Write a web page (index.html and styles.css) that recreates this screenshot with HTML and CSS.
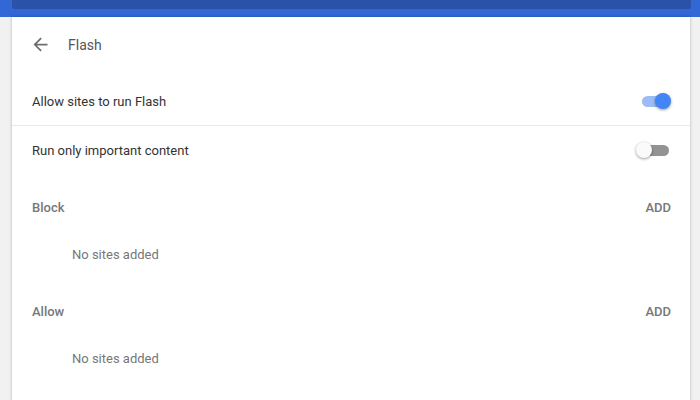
FILE: index.html
```html
<!DOCTYPE html>
<html lang="en">

<head>
    <meta charset="UTF-8">
    <title>Flash</title>
    <link rel="stylesheet" href="styles.css">
</head>

<body>

    <div class="toolbar">
        <div class="toolbar-strip"></div>
    </div>

    <div class="card">
        <div class="subpage-title">
            <svg class="back" viewBox="0 0 24 24" width="21" height="21">
                <path d="M20 11H7.83l5.59-5.59L12 4l-8 8 8 8 1.41-1.41L7.83 13H20v-2z" fill="#6e6e6e"/>
            </svg>
            <span>Flash</span>
        </div>

        <div class="row">
            <span>Allow sites to run Flash</span>
            <span class="toggle on"><span class="bar"></span><span class="knob"></span></span>
        </div>
        <div class="row divided">
            <span>Run only important content</span>
            <span class="toggle"><span class="bar"></span><span class="knob"></span></span>
        </div>

        <div class="section first">
            <div class="section-head">
                <span>Block</span>
                <span class="add">ADD</span>
            </div>
            <div class="empty">No sites added</div>
        </div>

        <div class="section">
            <div class="section-head">
                <span>Allow</span>
                <span class="add">ADD</span>
            </div>
            <div class="empty">No sites added</div>
        </div>
    </div>

</body>

</html>
```

FILE: styles.css
```css
body {
    margin: 0;
    background-color: #f1f1f1;
    font-family: Roboto, "Liberation Sans", sans-serif;
    font-size: 13px;
    color: #333;
    overflow: hidden;
}

.toolbar {
    height: 17px;
    background-color: #3367d6;
    padding: 0 9px 0 12px;
}

.toolbar-strip {
    height: 9px;
    background-color: #2a52a9;
    border-radius: 0 0 2px 2px;
}

.card {
    margin: 0 10px 0 12px;
    background-color: #fff;
    height: 400px;
    box-shadow: 0 0 3px rgba(0, 0, 0, 0.25);
}

.subpage-title {
    height: 56px;
    margin-bottom: 4px;
    display: flex;
    align-items: center;
    padding-left: 18px;
    font-size: 14px;
    color: #555;
}

.subpage-title .back {
    margin-right: 17px;
    margin-top: -2px;
}

.row {
    height: 48px;
    display: flex;
    align-items: center;
    justify-content: space-between;
    padding: 0 21px 0 20px;
}

.row.divided {
    border-top: 1px solid #e8e8e8;
}

/* toggle */
.toggle {
    position: relative;
    width: 29px;
    height: 16px;
}

.toggle .bar {
    position: absolute;
    left: 0;
    right: 0;
    top: 3px;
    height: 11px;
    border-radius: 6px;
    background-color: #939393;
}

.toggle .knob {
    position: absolute;
    left: -4px;
    top: 0;
    width: 16px;
    height: 16px;
    border-radius: 50%;
    background-color: #fafafa;
    box-shadow: 0 1px 3px rgba(0, 0, 0, 0.4);
}

.toggle.on .bar {
    background-color: #9bbcf6;
    left: 2px;
}

.toggle.on .knob {
    left: auto;
    right: -2px;
    background-color: #4285f4;
}

.section {
    margin-top: 10px;
}

.section.first {
    margin-top: 9px;
}

.section-head {
    height: 48px;
    display: flex;
    align-items: center;
    justify-content: space-between;
    padding: 0 19px 0 20px;
    color: #777;
    font-weight: 500;
}

.empty {
    height: 46px;
    display: flex;
    align-items: center;
    padding-left: 60px;
    color: #777;
}
```
